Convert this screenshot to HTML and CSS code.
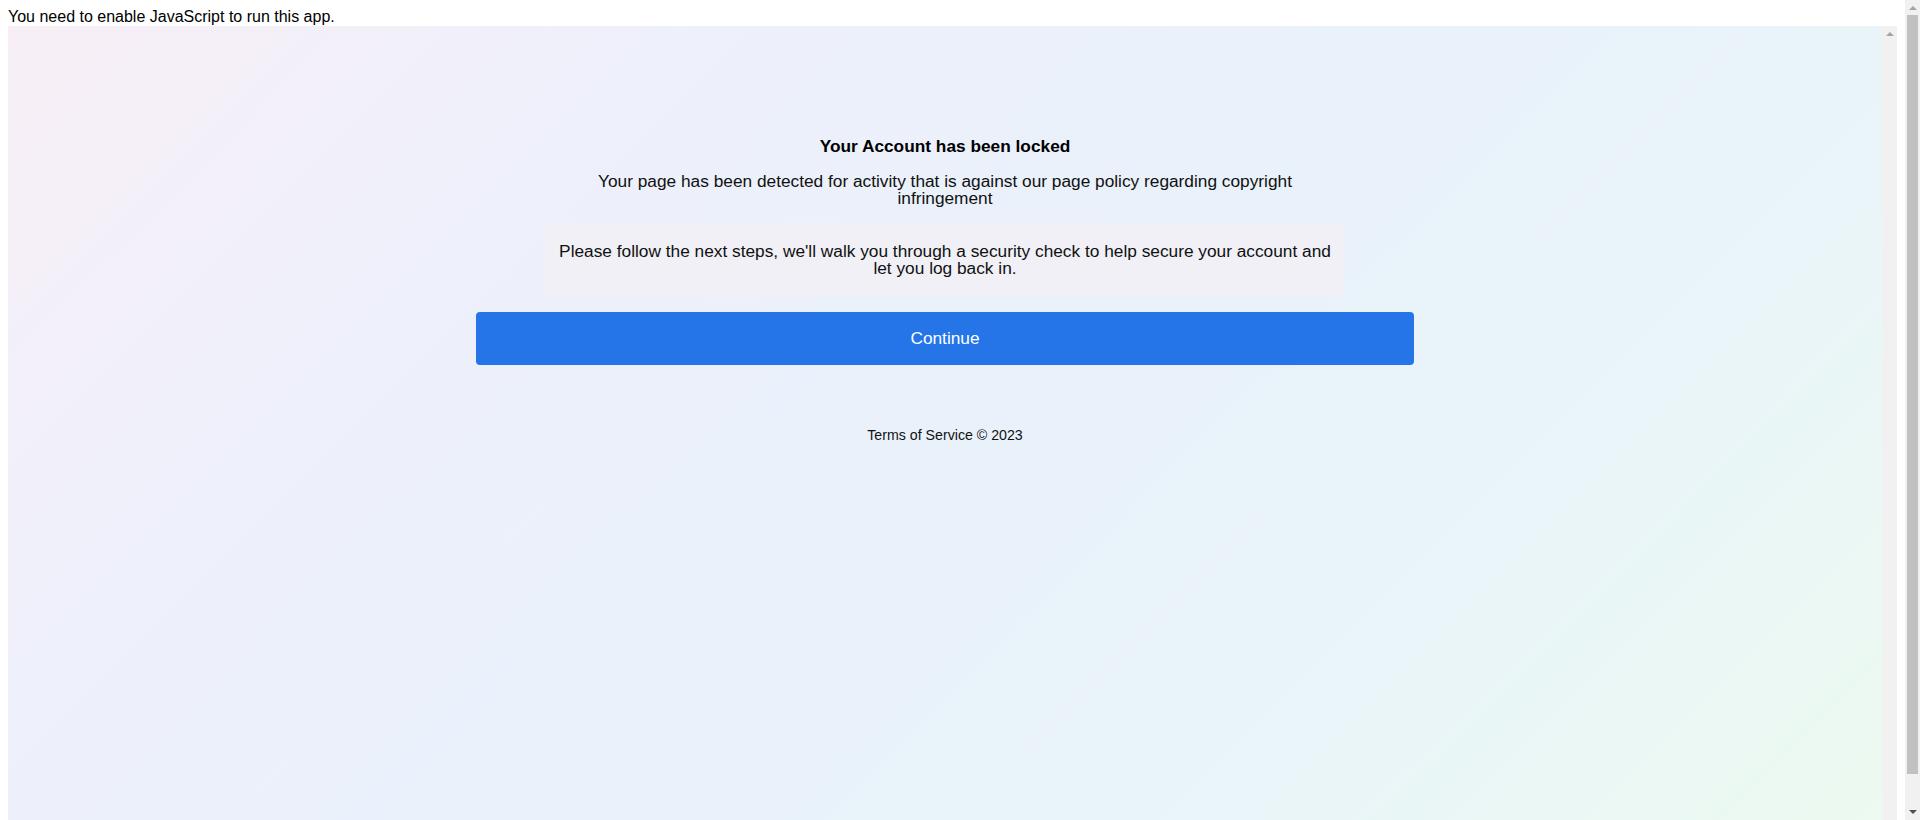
FILE: index.html
```html
<!DOCTYPE html>
<html lang="en">
<head>
<meta charset="utf-8">
<title>Account</title>
<link rel="stylesheet" href="styles.css">
</head>
<body>
<div class="page">
  <div class="viewport">
    <div class="noscript">You need to enable JavaScript to run this app.</div>
    <div class="frame">
      <main class="content">
        <h1 class="title">Your Account has been locked</h1>
        <p class="lead">Your page has been detected for activity that is against our page policy regarding copyright infringement</p>
        <div class="notice">Please follow the next steps, we'll walk you through a security check to help secure your account and let you log back in.</div>
        <button class="continue" type="button">Continue</button>
        <div class="footer">Terms of Service © 2023</div>
      </main>
      <div class="scrollbar inner">
        <span class="arrow up"></span>
      </div>
    </div>
  </div>
  <div class="scrollbar outer">
    <span class="arrow up"></span>
    <span class="thumb"></span>
    <span class="arrow down"></span>
  </div>
</div>
</body>
</html>
```

FILE: styles.css
```css
html, body {
  margin: 0;
  padding: 0;
  overflow: hidden;
}
body {
  font-family: "Liberation Sans", Arial, sans-serif;
  color: #000;
}
.page {
  display: flex;
  height: 820px;
  overflow: hidden;
}
.viewport {
  flex: 1;
  padding: 8px;
  min-width: 0;
}
.noscript {
  font-size: 16px;
  line-height: 18px;
}
.frame {
  display: flex;
  height: 820px;
  background: linear-gradient(135deg, #f8eff6 0%, #eef0fb 25%, #e9f1fb 50%, #e9f5f8 75%, #ecfaf0 100%);
}
.content {
  flex: 1;
  display: flex;
  flex-direction: column;
  align-items: center;
  padding-top: 112px;
}
.title {
  margin: 0;
  font-size: 17.3px;
  line-height: 17px;
  font-weight: bold;
  color: #000;
}
.lead {
  margin: 18px 0 0;
  max-width: 710px;
  font-size: 17.3px;
  line-height: 17px;
  text-align: center;
  color: #111;
}
.notice {
  box-sizing: border-box;
  width: 800px;
  margin-top: 16px;
  padding: 20px 12px;
  background: #f0f0f6;
  font-size: 17.3px;
  line-height: 17px;
  text-align: center;
  color: #111;
}
.continue {
  width: 938px;
  height: 53px;
  margin-top: 15px;
  border: none;
  border-radius: 4px;
  background: #2575e9;
  color: #fff;
  font-family: "Liberation Sans", Arial, sans-serif;
  font-size: 17.3px;
  cursor: pointer;
}
.footer {
  margin-top: 62px;
  font-size: 14.2px;
  line-height: 16px;
  color: #111;
}
.scrollbar {
  width: 15px;
  flex: none;
  background: #f1f1f1;
  display: flex;
  flex-direction: column;
  align-items: center;
}
.arrow {
  width: 0;
  height: 0;
  border-left: 4px solid transparent;
  border-right: 4px solid transparent;
}
.arrow.up {
  margin-top: 6px;
  border-bottom: 4px solid #a3a3a3;
}
.arrow.down {
  margin-top: 36px;
  border-top: 4px solid #505050;
}
.thumb {
  width: 11px;
  height: 759px;
  margin-top: 5px;
  background: #c1c1c1;
}
.outer {
  height: 820px;
}
```
